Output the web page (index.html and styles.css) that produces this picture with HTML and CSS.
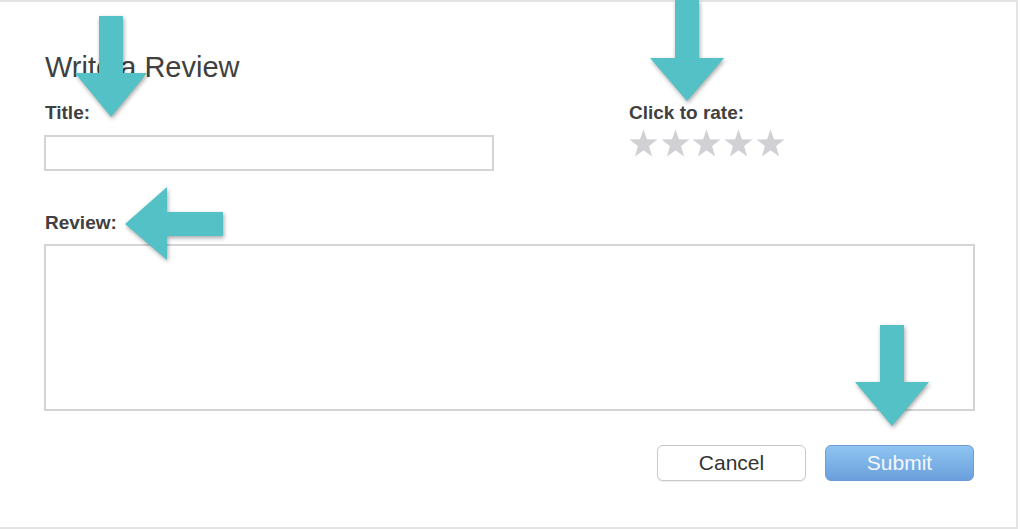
FILE: index.html
```html
<!DOCTYPE html>
<html lang="en">
<head>
    <meta charset="UTF-8">
    <meta name="viewport" content="width=device-width, initial-scale=1.0">
    <title>Write a Review</title>
    <link rel="stylesheet" href="styles.css">
</head>
<body>
    <div class="panel">
        <h1>Write a Review</h1>

        <div class="top-row">
            <div class="form-group">
                <label for="title">Title:</label>
                <input type="text" id="title" class="title-input">
            </div>
            <div class="rating">
                <span class="label">Click to rate:</span>
                <div class="stars">
                    <svg class="star" viewBox="0 0 28 28"><polygon points="14,0.5 17.3,10 27.5,10.2 19.4,16.4 22.3,26.5 14,20.5 5.7,26.5 8.6,16.4 0.5,10.2 10.7,10"/></svg>
                    <svg class="star" viewBox="0 0 28 28"><polygon points="14,0.5 17.3,10 27.5,10.2 19.4,16.4 22.3,26.5 14,20.5 5.7,26.5 8.6,16.4 0.5,10.2 10.7,10"/></svg>
                    <svg class="star" viewBox="0 0 28 28"><polygon points="14,0.5 17.3,10 27.5,10.2 19.4,16.4 22.3,26.5 14,20.5 5.7,26.5 8.6,16.4 0.5,10.2 10.7,10"/></svg>
                    <svg class="star" viewBox="0 0 28 28"><polygon points="14,0.5 17.3,10 27.5,10.2 19.4,16.4 22.3,26.5 14,20.5 5.7,26.5 8.6,16.4 0.5,10.2 10.7,10"/></svg>
                    <svg class="star" viewBox="0 0 28 28"><polygon points="14,0.5 17.3,10 27.5,10.2 19.4,16.4 22.3,26.5 14,20.5 5.7,26.5 8.6,16.4 0.5,10.2 10.7,10"/></svg>
                </div>
            </div>
        </div>

        <div class="form-group review-group">
            <label for="review">Review:</label>
            <textarea id="review" class="review-input"></textarea>
        </div>

        <div class="actions">
            <button type="button" class="btn btn-cancel">Cancel</button>
            <button type="submit" class="btn btn-submit">Submit</button>
        </div>

        <!-- callout arrows drawn over the form -->
        <svg class="arrows" width="1018" height="529" viewBox="0 0 1018 529">
            <polygon points="99,16 123,16 123,73 147,73 111,117 75,73 99,73"/>
            <polygon points="675,-4 699,-4 699,58 724,58 687,101 650,58 675,58"/>
            <polygon points="125,224 167,187 167,212 223,212 223,236 167,236 167,260"/>
            <polygon points="880,325 904,325 904,382 929,382 892,426 855,382 880,382"/>
        </svg>
    </div>
</body>
</html>
```

FILE: styles.css
```css
* {
    margin: 0;
    padding: 0;
    box-sizing: border-box;
}

body {
    font-family: 'Liberation Sans', Arial, sans-serif;
    background: white;
    color: #3b3b3b;
}

.panel {
    position: relative;
    width: 1018px;
    height: 529px;
    border-top: 2px solid #e3e3e3;
    border-right: 2px solid #e3e3e3;
    border-bottom: 2px solid #e3e3e3;
    padding: 48px 41px 0 44px;
}

h1 {
    font-size: 29px;
    font-weight: normal;
    line-height: 34px;
    color: #404040;
    margin-left: 1px;
}

.top-row {
    display: grid;
    grid-template-columns: 584px auto;
    margin-top: 18px;
}

label,
.label {
    display: block;
    font-size: 19px;
    font-weight: bold;
    line-height: 22px;
    color: #404040;
    margin-left: 1px;
}

.title-input {
    display: block;
    width: 450px;
    height: 36px;
    margin-top: 11px;
    border: 2px solid #d4d4d4;
    font-size: 16px;
    padding: 4px 8px;
    outline: none;
}

.stars {
    display: flex;
    gap: 2.7px;
    margin-top: 5px;
    margin-left: 1px;
}

.star {
    width: 29px;
    height: 29px;
    fill: #d1d1d5;
}

.review-group {
    margin-top: 41px;
}

.review-input {
    display: block;
    width: 931px;
    height: 167px;
    margin-top: 10px;
    border: 2px solid #d4d4d4;
    resize: none;
    outline: none;
    font-size: 16px;
    padding: 8px;
}

.actions {
    display: flex;
    justify-content: flex-end;
    gap: 19px;
    margin-top: 34px;
    padding-right: 1px;
}

.btn {
    width: 149px;
    height: 36px;
    border-radius: 6px;
    font-family: 'Liberation Sans', Arial, sans-serif;
    font-size: 21px;
    cursor: pointer;
}

.btn-cancel {
    background: white;
    color: #333;
    border: 1px solid #c9c9c9;
    box-shadow: 0 1px 1px rgba(0, 0, 0, 0.08);
}

.btn-submit {
    background: linear-gradient(#8ec4f1, #6b9fdc);
    color: #f4f8fd;
    border: 1px solid #6e9cd6;
}

.arrows {
    position: absolute;
    top: -2px;
    left: 0;
    fill: #53c1c5;
    filter: drop-shadow(1px 2px 2px rgba(0, 0, 0, 0.35));
    pointer-events: none;
}
```
